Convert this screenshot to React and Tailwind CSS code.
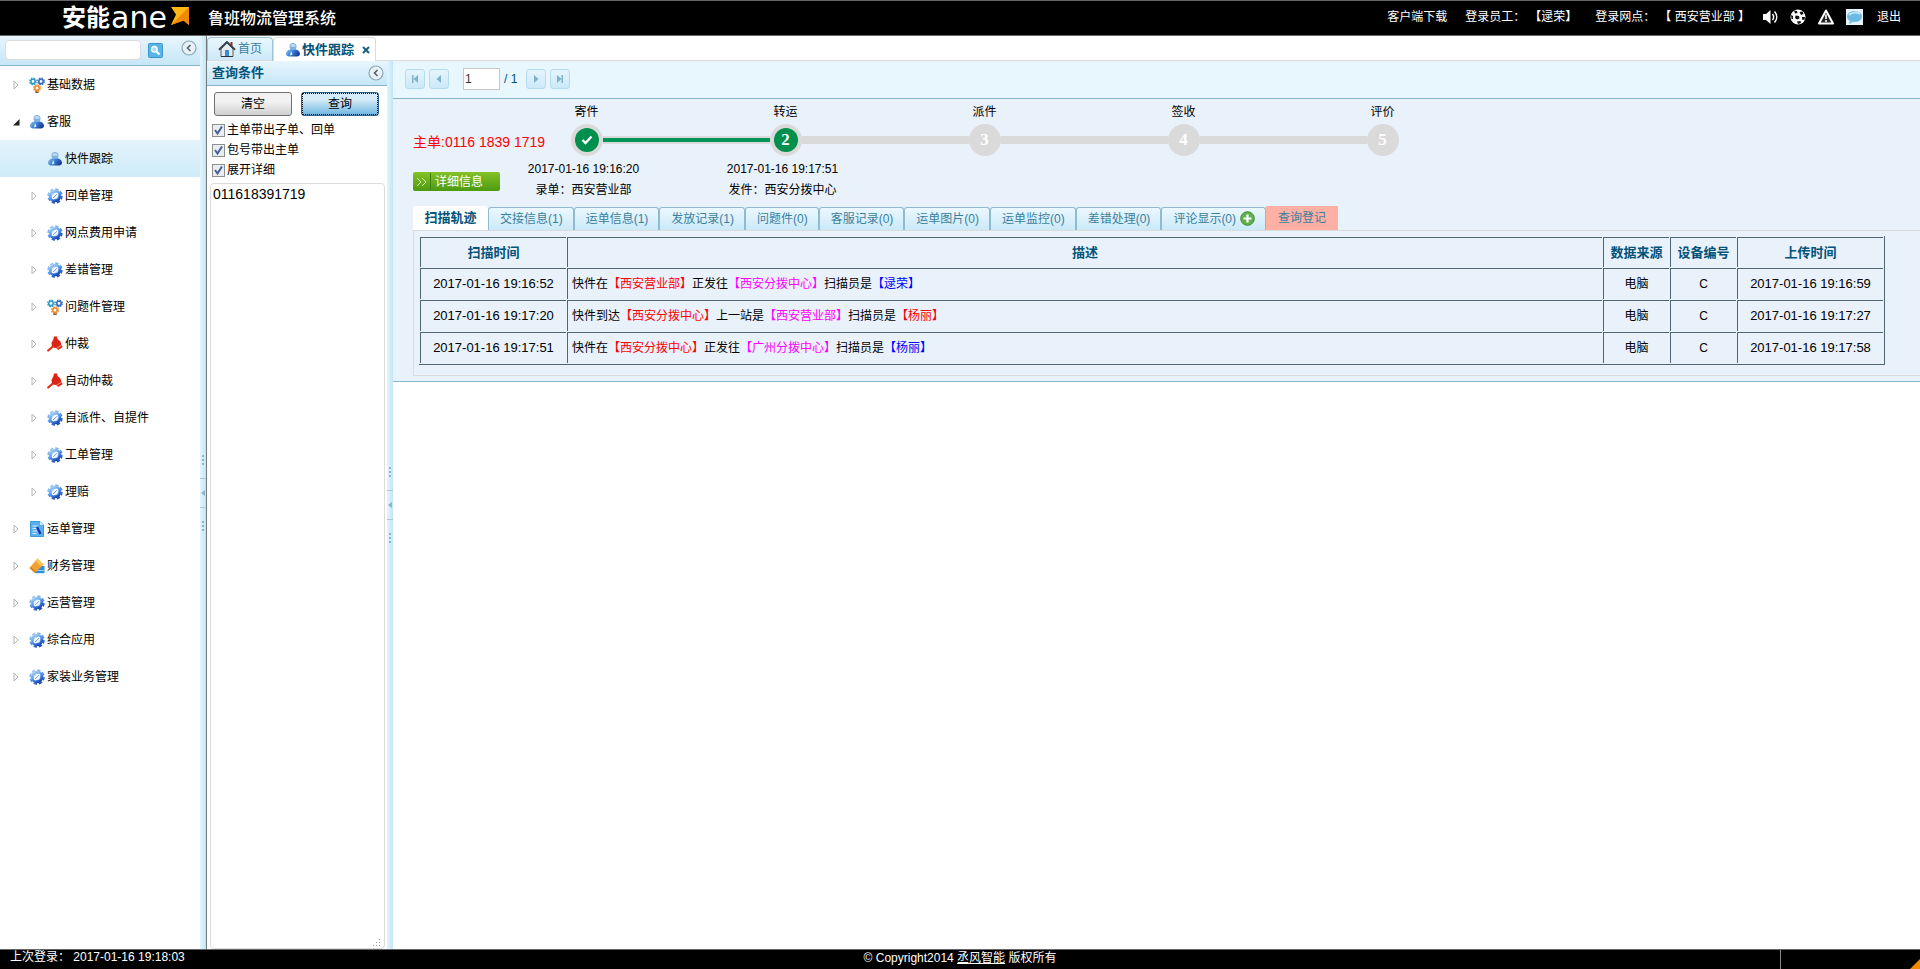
import React from "react";

const cx = (...parts) => parts.filter(Boolean).join(" ");

/* ---------- icons ---------- */

function GearIcon() {
  return (
    <svg width="16" height="16" viewBox="0 0 16 16" aria-hidden="true">
      <defs>
        <linearGradient id="gear" x1="0.2" y1="0" x2="0.8" y2="1">
          <stop offset="0" stopColor="#a4cdf2" />
          <stop offset="0.5" stopColor="#4f94ec" />
          <stop offset="1" stopColor="#1c48b4" />
        </linearGradient>
      </defs>
      <circle cx="8" cy="8" r="6.8" fill="none" stroke="url(#gear)" strokeWidth="1.8" strokeDasharray="3.34 2" />
      <circle cx="8" cy="8" r="4.8" fill="#b9d9f8" stroke="url(#gear)" strokeWidth="3" />
      <ellipse cx="8" cy="8" rx="4" ry="2.2" transform="rotate(-45 8 8)" fill="#fff" />
      <path d="M6.200 10L10 6.200" stroke="#4f94ec" strokeWidth="1" />
    </svg>
  );
}

function TrioIcon() {
  const ring = (x, y, c) => (
    <g key={c}>
      <circle cx={x} cy={y} r="3.3" fill="none" stroke={c} strokeWidth="1.2" strokeDasharray="1.6 1" />
      <circle cx={x} cy={y} r="2.2" fill="#fff" stroke={c} strokeWidth="1.6" />
    </g>
  );
  return (
    <svg width="16" height="16" viewBox="0 0 16 16" aria-hidden="true">
      {ring(4, 4.4, "#2f9cc4")}
      {ring(12, 4.4, "#3a6cc0")}
      {ring(8, 11.2, "#ee8a28")}
      <path d="M6.3 15.2h3.4" stroke="#5a3a10" strokeWidth="1.2" />
    </svg>
  );
}

function PersonIcon() {
  return (
    <svg width="16" height="16" viewBox="0 0 16 16" aria-hidden="true">
      <defs>
        <linearGradient id="person" x1="0" y1="0" x2="1" y2="0.4">
          <stop offset="0" stopColor="#8cc0ee" />
          <stop offset="0.5" stopColor="#3f86d8" />
          <stop offset="1" stopColor="#1c3f9c" />
        </linearGradient>
      </defs>
      <path d="M1 11.500C1.500 8.500 4 7 8 7s6.500 1.500 7 4.500c.2 2-1.500 2.900-3 3H4c-1.500-.1-3.200-1-3-3z" fill="url(#person)" />
      <circle cx="8" cy="4.600" r="3.500" fill="#7fb2e0" />
      <path d="M5 4.200A3.200 3.200 0 0 1 11 4.200C9 5 7 5 5 4.200z" fill="#c3dcf0" />
      <path d="M6 9l1.500 3.500L5 13.500z" fill="#e8f4ff" />
    </svg>
  );
}

function MalletIcon() {
  return (
    <svg width="16" height="16" viewBox="0 0 16 16" aria-hidden="true">
      <path d="M1.200 14.500L7 9.500" stroke="#e0301c" strokeWidth="2.200" strokeLinecap="round" />
      <path d="M7 .500h3l.5 2.500 3 2.500 1 4 1.300 1.500-4.800 3-1-1.500-5-1.500-.5-4L6.500 3z" fill="#dc2416" />
      <path d="M9.500 12.300l5.300-3.200" stroke="#f6b8b0" strokeWidth="0.800" />
    </svg>
  );
}

function DocIcon() {
  return (
    <svg width="16" height="16" viewBox="0 0 16 16" aria-hidden="true">
      <path d="M1.500.500h9.500l3.500 3.500v11.500h-13z" fill="#5ab0ee" stroke="#3f98dc" />
      <path d="M11 .500v3.500h3.500z" fill="#d2ecfc" />
      <path d="M3.500 5h5M3.500 7.500h5M3.500 10h5M3.500 12.500h4" stroke="#d6ecfb" strokeWidth="1" />
      <path d="M8 6l3.500 7" stroke="#1c34b4" strokeWidth="2.400" />
    </svg>
  );
}

function FinanceIcon() {
  return (
    <svg width="16" height="16" viewBox="0 0 16 16" aria-hidden="true">
      <path d="M6 8h9.500v7.200H6z" fill="#2f8fe0" />
      <path d="M7 12.500h8" stroke="#9ed0f6" />
      <path d="M8.500.500l6 6-8.500 8.500L.500 10z" fill="#f4a030" />
      <path d="M8.500.500l6 6-2 2-6.500-5.500z" fill="#fbc35a" />
      <path d="M.500 10l5.500 5 1-1-5-5z" fill="#d97a1a" />
    </svg>
  );
}

function HouseIcon() {
  return (
    <svg width="18" height="16" viewBox="0 0 18 16" aria-hidden="true">
      <path d="M12.500 1h2v4h-2z" fill="#a03020" />
      <path d="M3 8l6-6 6 6v7.500H3z" fill="#e6ebf0" stroke="#555e68" />
      <path d="M1 8.800L9 1l8 7.800" fill="none" stroke="#3c444e" strokeWidth="2" />
      <path d="M7 9h4v6.500H7z" fill="#3c8cdc" />
      <path d="M3 15.500h12" stroke="#2b3138" />
    </svg>
  );
}

const treeIcons = {
  gear: GearIcon,
  trio: TrioIcon,
  person: PersonIcon,
  mallet: MalletIcon,
  doc: DocIcon,
  finance: FinanceIcon,
};

function CollapseButton({ label }) {
  return (
    <button type="button" aria-label={label} className="h-4 w-4 shrink-0">
      <svg width="16" height="16" viewBox="0 0 16 16" aria-hidden="true">
        <circle cx="8" cy="8" r="7" fill="#e9f2f6" stroke="#88a7b4" strokeWidth="1.200" />
        <path d="M9.500 5L6.500 8l3 3" fill="none" stroke="#4d6470" strokeWidth="1.600" />
      </svg>
    </button>
  );
}

/* ---------- header and footer ---------- */

function Header() {
  return (
    <header className="flex h-9 shrink-0 items-center border-y border-[#666] bg-black pr-[19px] text-[12px] text-white">
      <div className="flex h-full w-[208px] shrink-0 items-center pl-[62px] leading-[34px] whitespace-nowrap">
        <span className="text-[24px] font-bold">安能</span>
        <span className="ml-px font-['DejaVu_Sans'] text-[30px]">ane</span>
        <svg className="ml-[3px] -mt-1" width="20" height="20" viewBox="0 0 20 20" aria-hidden="true">
          <path d="M1 1h18v18l-5.500-4.500L1 19l5-10.500z" fill="#fdb714" />
          <path d="M19 1v18l-5.500-4.500L1 19z" fill="#f18a00" />
        </svg>
      </div>
      <h1 className="pt-px text-[16px] font-medium">鲁班物流管理系统</h1>
      <nav className="ml-auto flex items-center pb-[3px] whitespace-nowrap">
        <a href="#download">客户端下载</a>
        <span className="ml-[18px]">登录员工：</span>
        <span className="ml-1">【逯荣】</span>
        <span className="ml-[18px]">登录网点：</span>
        <span className="ml-1">【 西安营业部 】</span>
        <div className="ml-3 flex items-center gap-3">
          <svg width="16" height="16" viewBox="0 0 16 16" aria-hidden="true">
            <path d="M1 5h3l4.500-4v14L4 11H1z" fill="#fff" />
            <path d="M10.500 5c1.400 1.800 1.400 4.200 0 6M12.500 2.500c3 3.300 3 7.700 0 11" fill="none" stroke="#fff" strokeWidth="1.500" />
          </svg>
          <svg width="16" height="16" viewBox="0 0 16 16" aria-hidden="true">
            <circle cx="8" cy="8" r="7.500" fill="#fff" />
            <path d="M4 1.500l3 .5.5 2L5 4.500zM9.500 3l3-.5 1 2.500-2.500 1zM5.500 6.500l3.500.5.5 2.500-2.500 1-2-1.500zM1 6l2 1 0 3-1.500 0zM12 8l3 0-.500 3-2.500-.500zM7 12.500l3.500-.500.5 2-3 1z" fill="#111" />
          </svg>
          <svg width="16" height="16" viewBox="0 0 16 16" aria-hidden="true">
            <path d="M8 1.500L15 14.500H1z" fill="#222" stroke="#fff" strokeWidth="2" strokeLinejoin="round" />
            <path d="M8 5.500v4.500M8 11v2" stroke="#fff" strokeWidth="1.600" />
          </svg>
          <svg width="17" height="16" viewBox="0 0 17 16" aria-hidden="true">
            <path d="M0 0h17v16H0z" fill="#e6f3fa" />
            <ellipse cx="8.500" cy="7.500" rx="7.500" ry="5.500" fill="#6cb9e4" />
            <path d="M3 6c3-3 8-3 11-1" fill="none" stroke="#c5e6f7" strokeWidth="2" />
            <path d="M4 12l-1 3 4-2z" fill="#6cb9e4" />
          </svg>
        </div>
        <a href="#logout" className="ml-[14px]">退出</a>
      </nav>
    </header>
  );
}

function Footer() {
  return (
    <footer className="relative flex h-5 shrink-0 border-t border-[#666] bg-black text-[12px] leading-[14px] text-white">
      <div className="flex-1">
        <p className="pl-[10px]">上次登录： 2017-01-16 19:18:03</p>
      </div>
      <p className="pt-px">
        © Copyright2014 <a href="#vendor" className="underline">丞风智能</a> 版权所有
      </p>
      <div className="flex flex-1 justify-end">
        <div className="w-[140px] border-l border-[#888]" />
      </div>
      <svg className="absolute right-0 bottom-0" width="10" height="10" viewBox="0 0 10 10" aria-hidden="true">
        <path d="M10 0v10H0z" fill="#f18a00" />
      </svg>
    </footer>
  );
}

/* ---------- sidebar ---------- */

const tree = [
  { level: 1, icon: "trio", label: "基础数据" },
  { level: 1, icon: "person", label: "客服", open: true },
  { level: 2, icon: "person", label: "快件跟踪", selected: true },
  { level: 2, icon: "gear", label: "回单管理" },
  { level: 2, icon: "gear", label: "网点费用申请" },
  { level: 2, icon: "gear", label: "差错管理" },
  { level: 2, icon: "trio", label: "问题件管理" },
  { level: 2, icon: "mallet", label: "仲裁" },
  { level: 2, icon: "mallet", label: "自动仲裁" },
  { level: 2, icon: "gear", label: "自派件、自提件" },
  { level: 2, icon: "gear", label: "工单管理" },
  { level: 2, icon: "gear", label: "理赔" },
  { level: 1, icon: "doc", label: "运单管理" },
  { level: 1, icon: "finance", label: "财务管理" },
  { level: 1, icon: "gear", label: "运营管理" },
  { level: 1, icon: "gear", label: "综合应用" },
  { level: 1, icon: "gear", label: "家装业务管理" },
];

function TreeItem({ item }) {
  const Icon = treeIcons[item.icon];
  return (
    <li>
      <a
        href="#menu"
        className={cx(
          "flex h-[37px] items-center",
          item.level === 1 ? "pl-[13px]" : "pl-[31px]",
          item.selected && "bg-linear-to-b from-[#e3f3fb] to-[#cfebf9]"
        )}
      >
        <svg className="mr-[9px]" width="7" height="10" viewBox="0 0 7 10" aria-hidden="true">
          {item.open && <path d="M6.500 2v6.500H0z" fill="#222" />}
          {!item.open && !item.selected && <path d="M1 1l4 4-4 4z" fill="#fff" stroke="#b4b4b4" />}
        </svg>
        <Icon />
        <span className="ml-[2px] pt-px">{item.label}</span>
      </a>
    </li>
  );
}

function Sidebar() {
  return (
    <aside className="flex w-[200px] shrink-0 flex-col bg-white">
      <div className="flex h-[30px] shrink-0 items-start border-b border-[#86b5cc] bg-linear-to-b from-[#e8f6fe] to-[#c6e6f7] pt-1 pl-[5px]">
        <input aria-label="搜索菜单" className="h-5 w-[136px] rounded-sm border border-[#dcdcdc] bg-white px-1" />
        <button type="button" aria-label="搜索" className="mt-[3px] ml-[7px] h-[15px] w-[15px]">
          <svg width="15" height="15" viewBox="0 0 15 15" aria-hidden="true">
            <rect x="0.500" y="0.500" width="14" height="14" rx="1" fill="#5bb4e8" stroke="#3c94cc" />
            <circle cx="6.300" cy="6.300" r="2.800" fill="#a9daf6" stroke="#fff" strokeWidth="1.400" />
            <path d="M8.500 8.500l3 3" stroke="#fff" strokeWidth="2" />
          </svg>
        </button>
        <div className="ml-auto pr-[3px]">
          <CollapseButton label="收起菜单" />
        </div>
      </div>
      <ul>
        {tree.map((item) => (
          <TreeItem key={item.label} item={item} />
        ))}
      </ul>
    </aside>
  );
}

function Dots() {
  return (
    <svg width="4" height="12" viewBox="0 0 4 12" aria-hidden="true">
      <path d="M1 1h2v2H1zM1 5h2v2H1zM1 9h2v2H1z" fill="#86b5cc" />
    </svg>
  );
}

function Splitter() {
  return (
    <div className="flex w-[6px] shrink-0 flex-col items-center justify-center gap-3 bg-linear-to-r from-[#e4f5fe] to-[#c2e6f8]">
      <Dots />
      <div className="flex h-[30px] w-full items-center justify-center border-y border-[#a4cadb]">
        <svg width="4" height="6" viewBox="0 0 4 6" aria-hidden="true">
          <path d="M4 0v6L0 3z" fill="#86b5cc" />
        </svg>
      </div>
      <Dots />
    </div>
  );
}

/* ---------- page tabs ---------- */

function PageTabs() {
  return (
    <nav className="flex h-[25px] shrink-0 items-end pt-px">
      <a
        href="#home"
        className="flex h-full w-[66px] items-center rounded-t-sm border border-b-[#dcdcdc] border-[#9cc3d6] bg-linear-to-b from-[#ebf8ff] to-[#cbe9f8] pl-[10px] text-[#3a7f9e]"
      >
        <HouseIcon />
        <span className="ml-[2px]">首页</span>
      </a>
      <div className="flex h-full w-[103px] items-center rounded-t-sm border border-b-0 border-[#dcdcdc] bg-white pl-[11px] text-[#015379]">
        <PersonIcon />
        <a href="#tracking" className="ml-px text-[13px] font-bold">快件跟踪</a>
        <button type="button" aria-label="关闭" className="ml-2">
          <svg width="8" height="8" viewBox="0 0 8 8" aria-hidden="true">
            <path d="M1 1l6 6M7 1L1 7" stroke="#1d5f80" strokeWidth="2" />
          </svg>
        </button>
      </div>
      <div className="h-full flex-1 border-b border-[#dcdcdc]" />
    </nav>
  );
}

/* ---------- query panel ---------- */

const options = ["主单带出子单、回单", "包号带出主单", "展开详细"];

function QueryPanel() {
  return (
    <section className="flex w-[180px] shrink-0 flex-col bg-white">
      <div className="flex h-[25px] shrink-0 items-center justify-between border-b border-[#86b5cc] bg-linear-to-b from-[#e8f6fe] to-[#c6e6f7] pr-[3px] pl-[5px]">
        <h2 className="text-[13px] font-bold text-[#015379]">查询条件</h2>
        <CollapseButton label="收起查询条件" />
      </div>
      <div className="flex shrink-0 gap-[9px] pt-[6px] pr-2 pl-[7px]">
        <button type="button" className="h-6 flex-1 rounded-[3px] border border-[#707070] bg-linear-to-b from-[#f2f2f2] from-40% to-[#cfcfcf]">
          清空
        </button>
        <button type="button" className="h-6 flex-1 rounded-[3px] border border-[#2c628b] bg-linear-to-b from-[#d5ecf8] from-30% to-[#6db6e0]">
          <span className="flex h-full items-center justify-center border border-dotted border-black">查询</span>
        </button>
      </div>
      <div className="flex shrink-0 flex-col gap-[2px] pt-[5px] pb-1 pl-[5px]">
        {options.map((text) => (
          <label key={text} className="relative flex h-[18px] items-center gap-[2px]">
            <input type="checkbox" defaultChecked className="h-[13px] w-[13px] appearance-none border border-[#8e8f8f] bg-[#e9edf2]" />
            <svg className="pointer-events-none absolute left-0" width="13" height="13" viewBox="0 0 13 13" aria-hidden="true">
              <path d="M3 6l2.500 3.500L10 2.500" fill="none" stroke="#4b5f97" strokeWidth="2" />
            </svg>
            <span>{text}</span>
          </label>
        ))}
      </div>
      <div className="relative mr-[2px] ml-[3px] flex flex-1">
        <textarea
          aria-label="单号"
          defaultValue="011618391719"
          className="w-full resize-none rounded-sm border border-[#dcdcdc] px-[2px] text-[14px] leading-[20px]"
        />
        <svg className="absolute right-1 bottom-[2px]" width="8" height="8" viewBox="0 0 8 8" aria-hidden="true">
          <path d="M6 0h1v1H6zM3 3h1v1H3zM6 3h1v1H6zM0 6h1v1H0zM3 6h1v1H3zM6 6h1v1H6z" fill="#999" />
        </svg>
      </div>
    </section>
  );
}

/* ---------- results ---------- */

function PagerButton({ label, children }) {
  return (
    <button type="button" aria-label={label} className="flex h-5 w-5 items-center justify-center rounded-[3px] border border-[#b4dcf0] bg-linear-to-b from-[#e6f5fd] to-[#cbe9f8]">
      <svg width="10" height="10" viewBox="0 0 10 10" fill="#7fb1ca" aria-hidden="true">
        {children}
      </svg>
    </button>
  );
}

function Pager() {
  return (
    <div className="flex h-[38px] shrink-0 items-center border-b border-[#86b5cc] bg-[#e8f6fe] pb-px pl-3 text-[#015379]">
      <div className="flex gap-1">
        <PagerButton label="首页">
          <path d="M2 1h1.500v8H2zM8 1v8L3.500 5z" />
        </PagerButton>
        <PagerButton label="上一页">
          <path d="M7 1v8L2.500 5z" />
        </PagerButton>
      </div>
      <input
        aria-label="页码"
        defaultValue="1"
        className="ml-[14px] h-[22px] w-[37px] border border-[#c8c8c8] bg-white px-px pb-px text-[12px] text-[#333]"
      />
      <span className="ml-1">/ 1</span>
      <div className="ml-[9px] flex gap-1">
        <PagerButton label="下一页">
          <path d="M3 1v8L7.500 5z" />
        </PagerButton>
        <PagerButton label="末页">
          <path d="M2 1v8L6.500 5zM6.500 1H8v8H6.500z" />
        </PagerButton>
      </div>
    </div>
  );
}

const steps = [
  { name: "寄件", time: "2017-01-16 19:16:20", text: "录单：西安营业部", left: "none", right: "green", done: true },
  { name: "转运", time: "2017-01-16 19:17:51", text: "发件：西安分拨中心", left: "green", right: "gray", done: true },
  { name: "派件", left: "gray", right: "gray" },
  { name: "签收", left: "gray", right: "gray" },
  { name: "评价", left: "gray", right: "none" },
];

function Connector({ kind }) {
  if (kind === "none") return <div className="flex-1" />;
  return (
    <div className="flex h-2 flex-1 items-center bg-[#dadada]">
      {kind === "green" && <div className="h-1 w-full bg-[#009558]" />}
    </div>
  );
}

function Step({ step, index }) {
  return (
    <li className="w-[199px] text-center">
      <div className="leading-[18px]">{step.name}</div>
      <div className="mt-[3px] flex items-center">
        <Connector kind={step.left} />
        <div className="flex h-8 w-8 items-center justify-center rounded-full bg-[#dadada]">
          <div
            className={cx(
              "flex h-6 w-6 items-center justify-center rounded-full font-['Liberation_Serif',serif] text-[17px] leading-[24px] font-bold text-white",
              step.done && "bg-[#008f4c]"
            )}
          >
            {index === 0 ? (
              <svg width="12" height="10" viewBox="0 0 12 10" aria-hidden="true">
                <path d="M1.500 5l3 3 6-6.500" fill="none" stroke="#fff" strokeWidth="2.400" />
              </svg>
            ) : (
              index + 1
            )}
          </div>
        </div>
        <Connector kind={step.right} />
      </div>
      {step.time && (
        <div className="pt-[3px] pr-[6px] leading-[21px]">
          <div>{step.time}</div>
          <div>{step.text}</div>
        </div>
      )}
    </li>
  );
}

const detailTabs = [
  "交接信息(1)",
  "运单信息(1)",
  "发放记录(1)",
  "问题件(0)",
  "客服记录(0)",
  "运单图片(0)",
  "运单监控(0)",
  "差错处理(0)",
];

function DetailTabs() {
  const tab =
    "flex h-[23px] items-center rounded-t-[3px] border border-b-0 border-[#8fbbd0] bg-linear-to-b from-[#ebf8ff] to-[#cbe9f8] pr-[10px] pb-px pl-[11px]";
  return (
    <div className="flex h-6 items-end text-[#3a7f9e]">
      <button type="button" className="h-6 w-[75px] rounded-t-[3px] bg-white text-[13px] font-bold text-[#015379]">
        扫描轨迹
      </button>
      {detailTabs.map((text) => (
        <button type="button" key={text} className={tab}>
          {text}
        </button>
      ))}
      <button type="button" className={tab}>
        评论显示(0)
        <svg className="ml-1" width="15" height="15" viewBox="0 0 15 15" aria-hidden="true">
          <circle cx="7.500" cy="7.500" r="6.800" fill="#62b04a" stroke="#3f8a34" />
          <path d="M7.500 3.500v8M3.500 7.500h8" stroke="#fff" strokeWidth="2.200" />
        </svg>
      </button>
      <button type="button" className="h-6 bg-[#ffb0a4] px-3">
        查询登记
      </button>
    </div>
  );
}

const red = "text-[#ff0000]";
const pink = "text-[#ff00ff]";
const blue = "text-[#0000ff]";

const rows = [
  {
    scanned: "2017-01-16 19:16:52",
    uploaded: "2017-01-16 19:16:59",
    parts: [["快件在"], ["【西安营业部】", red], ["正发往"], ["【西安分拨中心】", pink], ["扫描员是"], ["【逯荣】", blue]],
  },
  {
    scanned: "2017-01-16 19:17:20",
    uploaded: "2017-01-16 19:17:27",
    parts: [["快件到达"], ["【西安分拨中心】", red], ["上一站是"], ["【西安营业部】", pink], ["扫描员是"], ["【杨丽】", red]],
  },
  {
    scanned: "2017-01-16 19:17:51",
    uploaded: "2017-01-16 19:17:58",
    parts: [["快件在"], ["【西安分拨中心】", red], ["正发往"], ["【广州分拨中心】", pink], ["扫描员是"], ["【杨丽】", blue]],
  },
];

function ScanTable() {
  const th = "h-[30px] border-t border-l border-[#4d6672] text-[13px] font-bold";
  const td = "h-[31px] border-t border-l border-[#4d6672] text-center";
  return (
    <table className="w-full table-fixed border-separate border-spacing-px border-r border-b border-[#4d6672]">
      <thead className="text-[#015379]">
        <tr>
          <th className={cx(th, "w-[146px]")}>扫描时间</th>
          <th className={th}>描述</th>
          <th className={cx(th, "w-[66px]")}>数据来源</th>
          <th className={cx(th, "w-[66px]")}>设备编号</th>
          <th className={cx(th, "w-[146px]")}>上传时间</th>
        </tr>
      </thead>
      <tbody>
        {rows.map((row) => (
          <tr key={row.scanned}>
            <td className={cx(td, "text-[13px]")}>{row.scanned}</td>
            <td className="h-[31px] border-t border-l border-[#4d6672] pl-1">
              {row.parts.map(([text, color]) => (
                <span key={text} className={color}>
                  {text}
                </span>
              ))}
            </td>
            <td className={td}>电脑</td>
            <td className={td}>C</td>
            <td className={cx(td, "text-[13px]")}>{row.uploaded}</td>
          </tr>
        ))}
      </tbody>
    </table>
  );
}

function Results() {
  return (
    <main className="flex min-w-0 flex-1 flex-col bg-white">
      <Pager />
      <section className="border-b border-[#86b5cc] bg-[#e9f1fb] pt-1 pb-[5px] pl-5">
        <div className="flex h-[103px]">
          <div className="relative flex w-[135px] shrink-0 flex-col items-start pt-[29px]">
            <div className="text-[14px] leading-[20px] whitespace-nowrap text-[#ff0000]">主单:0116 1839 1719</div>
            <button type="button" className="mt-5 flex h-[19px] w-[87px] items-center rounded-xs bg-linear-to-b from-[#85c226] to-[#4c9a10] text-white">
              <svg width="18" height="19" viewBox="0 0 18 19" aria-hidden="true">
                <path d="M4 6l4 4-4 4M9 6l4 4-4 4" fill="none" stroke="#d8f0b0" />
                <path d="M17.500 1v17" stroke="#3a7f10" />
              </svg>
              <span className="ml-1">详细信息</span>
            </button>
          </div>
          <ol className="-ml-[61px] flex">
            {steps.map((step, index) => (
              <Step key={step.name} step={step} index={index} />
            ))}
          </ol>
        </div>
        <DetailTabs />
        <div className="border-y border-l border-[#dcdcdc] pt-[5px] pr-[35px] pb-[10px] pl-[5px]">
          <ScanTable />
        </div>
      </section>
    </main>
  );
}

export default function App() {
  return (
    <div className="flex h-screen flex-col overflow-hidden bg-white font-['Liberation_Sans','Noto_Sans_CJK_SC',sans-serif] text-[12px] leading-[18px] text-black">
      <Header />
      <div className="flex min-h-0 flex-1">
        <Sidebar />
        <Splitter />
        <div className="flex min-w-0 flex-1 flex-col border-l border-[#777]">
          <PageTabs />
          <div className="flex min-h-0 flex-1">
            <QueryPanel />
            <Splitter />
            <Results />
          </div>
        </div>
      </div>
      <Footer />
    </div>
  );
}
